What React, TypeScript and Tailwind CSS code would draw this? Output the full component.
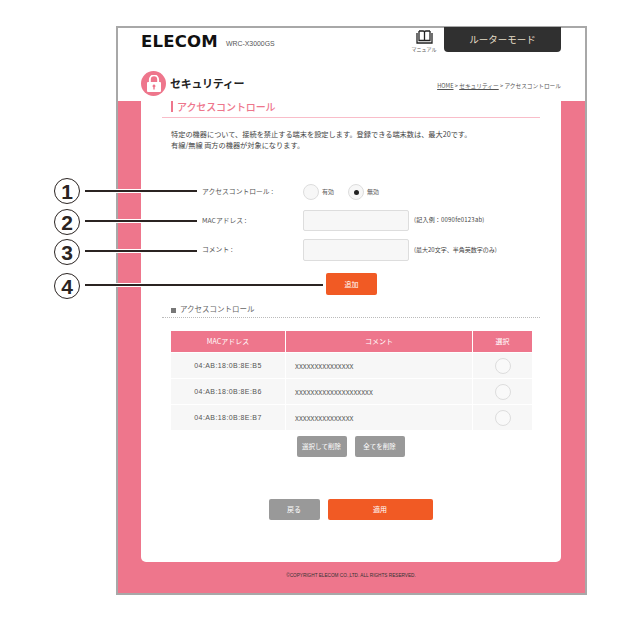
const rows = [
  { mac: "04:AB:18:0B:8E:B5", comment: "XXXXXXXXXXXXXXX" },
  { mac: "04:AB:18:0B:8E:B6", comment: "XXXXXXXXXXXXXXXXXXXX" },
  { mac: "04:AB:18:0B:8E:B7", comment: "XXXXXXXXXXXXXXX" },
];

const callouts = [
  { label: "1", y: "top-[178px]", line: "top-[190px] w-[112px]" },
  { label: "2", y: "top-[209px]", line: "top-[220px] w-[112px]" },
  { label: "3", y: "top-[239px]", line: "top-[250px] w-[112px]" },
  { label: "4", y: "top-[273px]", line: "top-[284px] w-[238px]" },
];

function BookIcon() {
  return (
    <svg width="17" height="14" viewBox="0 0 17 14" fill="none" stroke="#222" strokeWidth="1.3">
      <path d="M3 1h4.200c.8 0 1.300.5 1.300 1.300v8.700M14 1H9.800c-.8 0-1.300.5-1.300 1.300" />
      <path d="M3 1v9.500h11V1" />
      <path d="M1 3v10h15V3" />
    </svg>
  );
}

function LockIcon() {
  return (
    <svg width="14" height="17" viewBox="0 0 14 17" fill="#fff">
      <path d="M3.800 7V4.500a3.200 3.200 0 0 1 6.400 0V7h1.900V4.500a5.100 5.100 0 0 0-10.200 0V7z" />
      <path
        fillRule="evenodd"
        d="M1 7h12a1 1 0 0 1 1 1v8a1 1 0 0 1-1 1H1a1 1 0 0 1-1-1V8a1 1 0 0 1 1-1zm6 2.500a1.500 1.500 0 0 0-.7 2.800V14.500h1.400v-2.200A1.500 1.500 0 0 0 7 9.500z"
      />
    </svg>
  );
}

export default function App() {
  return (
    <div className="relative w-[620px] h-[620px] bg-white pt-[26px] pl-[116px] font-['Noto_Sans_CJK_JP','Noto_Sans',sans-serif] text-[#444]">
      <div className="flex flex-col w-[471px] h-[569px] border-2 border-[#a8a8a8]">
        {/* Header */}
        <header className="flex flex-col h-[73px] pl-[23px] pr-[24px] bg-white">
          <div className="flex items-start">
            <span className="mt-[4px] font-['DejaVu_Sans',sans-serif] font-bold text-[15px] leading-[20px] tracking-[0.2px] text-[#111] scale-x-[1.1] origin-left">
              ELECOM
            </span>
            <span className="ml-[15px] mt-[10px] font-['Liberation_Sans',sans-serif] text-[6.900px] leading-[12px] text-[#555]">
              WRC-X3000GS
            </span>
            <div className="ml-auto mt-[2px] flex flex-col items-center w-[30px]">
              <BookIcon />
              <span className="mt-[1px] text-[5px] leading-[8px] text-[#555] whitespace-nowrap">マニュアル</span>
            </div>
            <div className="ml-[5px] -mt-[1px] flex items-center justify-center w-[117px] h-[25px] rounded-b-[4px] bg-[#303030] text-[#e6dfc8] text-[9.500px]">
              ルーターモード
            </div>
          </div>
          <div className="flex items-center mt-[18px]">
            <div className="flex items-center justify-center w-[25px] h-[25px] rounded-full bg-[#ee768c]">
              <LockIcon />
            </div>
            <h1 className="ml-[4px] text-[11px] tracking-[-0.3px] leading-[25px] font-bold text-[#222]">セキュリティー</h1>
            <div className="ml-auto mt-[5px] text-[5.700px] leading-[10px] text-[#555]">
              <span className="underline">HOME</span> &gt; <span className="underline">セキュリティー</span> &gt; アクセスコントロール
            </div>
          </div>
        </header>

        {/* Pink body */}
        <main className="flex flex-col flex-1 pl-[23px] pr-[24px] bg-[#ee768c]">
          <div className="flex flex-col h-[461px] px-[21px] bg-white rounded-b-[5px]">
            <div className="flex items-start h-[16px] pl-[9px]">
              <span className="w-[2px] h-[11px] bg-[#ee768c]" />
              <h2 className="ml-[4px] text-[10px] leading-[12px] font-medium text-[#ee768c] tracking-[-0.1px]">アクセスコントロール</h2>
            </div>
            <div className="h-px bg-[#f9bdc9]" />
            <p className="mt-[11px] pl-[9px] text-[7.200px] leading-[11px] text-[#444]">
              特定の機器について、接続を禁止する端末を設定します。登録できる端末数は、最大20です。
              <br />
              有線/無線 両方の機器が対象になります。
            </p>

            {/* Form */}
            <div className="flex items-center mt-[33px] h-[16px]">
              <span className="w-[141px] pl-[40px] mb-[2px] text-[6.800px] text-[#555]">アクセスコントロール :</span>
              <span className="w-[16px] h-[16px] rounded-full border border-[#ddd] bg-[#f7f7f7]" />
              <span className="ml-[3px] mb-[2px] text-[6px] text-[#555]">有効</span>
              <span className="ml-[14px] flex items-center justify-center w-[16px] h-[16px] rounded-full border border-[#ddd] bg-[#f7f7f7]">
                <span className="w-[5px] h-[5px] rounded-full bg-[#222]" />
              </span>
              <span className="ml-[3px] mb-[2px] text-[6px] text-[#555]">無効</span>
            </div>
            <div className="flex items-center mt-[10px] h-[21px]">
              <span className="w-[141px] pl-[40px] text-[6.800px] text-[#555]">MACアドレス :</span>
              <div className="w-[106px] h-[21px] rounded-[2px] border border-[#ddd] bg-[#f7f7f7]" />
              <span className="ml-[5px] mb-[2px] text-[6px] tracking-[0.2px] text-[#444]">(記入例：0090fe0123ab)</span>
            </div>
            <div className="flex items-center mt-[8px] h-[22px]">
              <span className="w-[141px] pl-[40px] mb-[2px] text-[6.800px] text-[#555]">コメント :</span>
              <div className="w-[106px] h-[22px] rounded-[2px] border border-[#ddd] bg-[#f7f7f7]" />
              <span className="ml-[5px] mb-[2px] text-[6px] text-[#444]">(最大20文字、半角英数字のみ)</span>
            </div>
            <div className="flex mt-[12px] ml-[164px]">
              <button className="w-[51px] h-[22px] rounded-[2px] bg-[#f15a24] text-white text-[7px]">追加</button>
            </div>

            {/* List */}
            <div className="flex items-center mt-[7px] pl-[9px] h-[15px] text-[7.500px] text-[#666]">
              <span className="w-[5px] h-[5px] mt-[1px] bg-[#777]" />
              <span className="ml-[4px] mb-[1px]">アクセスコントロール</span>
            </div>
            <div className="h-0 border-t border-dotted border-[#bbb]" />

            <div className="mt-[13px] ml-[9px] w-[361px] text-[7px]">
              <div className="grid grid-cols-[114px_186px_59px] gap-x-px h-[21px] bg-white text-white text-center leading-[20px]">
                <div className="bg-[#ee768c]">MACアドレス</div>
                <div className="bg-[#ee768c]">コメント</div>
                <div className="bg-[#ee768c]">選択</div>
              </div>
              {rows.map((row) => (
                <div key={row.mac} className="grid grid-cols-[114px_186px_59px] gap-x-px h-[25px] mt-px text-[#555] items-stretch">
                  <div className="flex items-center justify-center pt-[2px] bg-[#f7f7f7] font-['Liberation_Sans',sans-serif] tracking-[0.42px]">{row.mac}</div>
                  <div className="flex items-center pl-[9px] pt-[1px] bg-[#f7f7f7] text-[6.800px]">{row.comment}</div>
                  <div className="flex items-center justify-center bg-[#f7f7f7]">
                    <span className="w-[16px] h-[16px] rounded-full border border-[#ddd] bg-[#f9f9f9]" />
                  </div>
                </div>
              ))}
            </div>

            <div className="flex justify-center gap-[8px] mt-[6px] pr-[1px]">
              <button className="w-[50px] h-[21px] rounded-[2px] bg-[#999] text-white text-[6.500px]">選択して削除</button>
              <button className="w-[50px] h-[21px] rounded-[2px] bg-[#999] text-white text-[6.500px]">全てを削除</button>
            </div>

            <div className="flex justify-center gap-[8px] mt-[42px] pr-[1px]">
              <button className="w-[51px] h-[21px] rounded-[2px] bg-[#999] text-white text-[7px]">戻る</button>
              <button className="w-[105px] h-[21px] rounded-[2px] bg-[#f15a24] text-white text-[7px]">適用</button>
            </div>
          </div>
          <footer className="flex flex-1 items-center justify-center pb-[3px] font-['Liberation_Sans',sans-serif] text-[4.700px] text-[#333]">
            ©COPYRIGHT ELECOM CO.,LTD. ALL RIGHTS RESERVED.
          </footer>
        </main>
      </div>

      {/* Callouts lie over the page */}
      {callouts.map((c) => (
        <div key={c.label}>
          <span className={`absolute left-[54px] ${c.y} flex items-center justify-center w-[26px] h-[26px] rounded-full border-[1.500px] border-[#2b2422] bg-white font-['Liberation_Sans',sans-serif] font-bold text-[21px] leading-none text-[#2b2422]`}>
            {c.label}
          </span>
          <span className={`absolute left-[85px] ${c.line} h-[2px] bg-[#2b2422] shadow-[0_1px_0_#fff,0_-1px_0_#fff]`} />
        </div>
      ))}
    </div>
  );
}
